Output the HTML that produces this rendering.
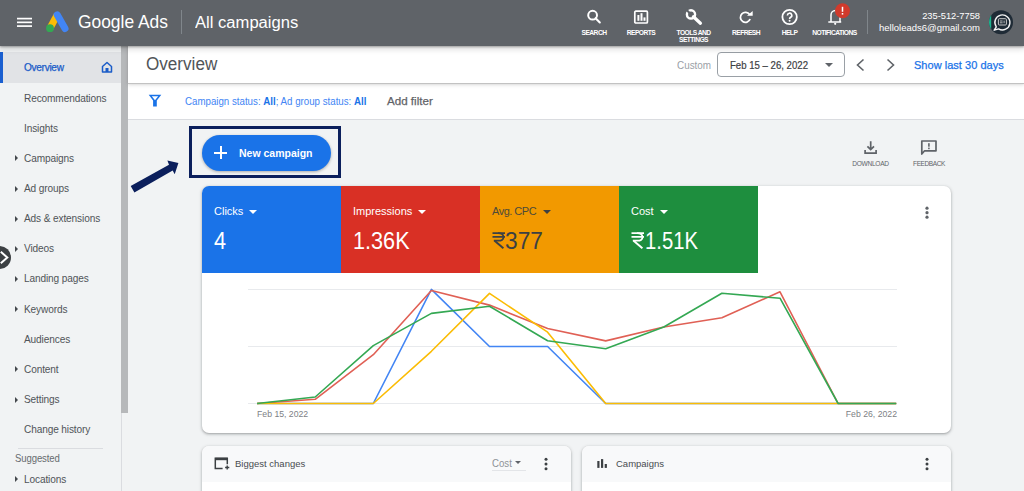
<!DOCTYPE html>
<html><head><meta charset="utf-8">
<style>
*{box-sizing:border-box;margin:0;padding:0}
html,body{width:1024px;height:491px;overflow:hidden;background:#f1f3f4;font-family:"Liberation Sans",sans-serif;}
.a{position:absolute;white-space:nowrap}
#top{position:absolute;left:0;top:0;width:1024px;height:46px;background:#5f6368;z-index:5;box-shadow:0 1px 2px rgba(0,0,0,.3),0 2px 6px 1px rgba(0,0,0,.15)}
#side{position:absolute;left:0;top:46px;width:121px;height:445px;background:#f1f3f4}
#sbar{position:absolute;left:121px;top:46px;width:7px;height:445px;background:#f1f3f4;border-left:1px solid #dadce0}
#sthumb{position:absolute;left:121px;top:46px;width:7px;height:367px;background:#b6b8ba}
.si{position:absolute;left:24px;font-size:10.1px;color:#505458;letter-spacing:-0.12px;line-height:12px;margin-top:1.4px}
.tri{position:absolute;left:15px;width:0;height:0;border-top:3px solid transparent;border-bottom:3px solid transparent;border-left:3.8px solid #44484c;margin-top:-0.1px}
#hdr{position:absolute;left:128px;top:46px;width:896px;height:38px;background:#fff;border-bottom:1px solid #c2c2c2;box-shadow:0 1px 4px rgba(0,0,0,.13),0 0 2px rgba(0,0,0,.08)}
#flt{position:absolute;left:128px;top:83px;width:896px;height:37px;background:#fff;border-bottom:1px solid #dadce0}
.card{position:absolute;background:#fff;border-radius:7px;box-shadow:0 1px 2px rgba(60,64,67,.3),0 1px 3px 1px rgba(60,64,67,.15)}
.tile{position:absolute;top:0;width:139px;height:87px}
.tl{position:absolute;left:12px;top:19px;font-size:11px;line-height:12px}
.tv{position:absolute;left:12px;top:42px;font-size:23.3px;line-height:26px;transform:scaleX(0.93);transform-origin:0 0}
.dd{display:inline-block;width:0;height:0;border-left:4px solid transparent;border-right:4px solid transparent;border-top:4px solid currentColor;margin-left:6px;vertical-align:2px;position:relative;top:1.2px}
.ic{position:absolute;font-size:6.7px;font-weight:bold;color:#fff;text-align:center;line-height:7.8px;letter-spacing:-0.55px;top:28.6px !important}
</style></head><body>

<!-- top bar -->
<div id="top">
  <!-- hamburger -->
  <svg class="a" style="left:16px;top:16px" width="18" height="13" viewBox="0 0 18 13"><g stroke="#fff" stroke-width="1.7"><line x1="1" y1="2.6" x2="16" y2="2.6"/><line x1="1" y1="6.35" x2="16" y2="6.35"/><line x1="1" y1="10.1" x2="16" y2="10.1"/></g></svg>
  <!-- logo -->
  <svg class="a" style="left:44px;top:10px" width="26" height="24" viewBox="0 0 26 24">
    <line x1="13.2" y1="4.8" x2="6" y2="18.2" stroke="#fbbc04" stroke-width="7" stroke-linecap="butt"/>
    <line x1="13.2" y1="4.8" x2="21" y2="18.5" stroke="#4285f4" stroke-width="7" stroke-linecap="round"/>
    <circle cx="6" cy="18.2" r="3.9" fill="#34a853"/>
  </svg>
  <div class="a" style="left:78px;top:11px;font-size:18.5px;line-height:22px;color:#fff;transform:scaleX(0.94);transform-origin:0 0">Google Ads</div>
  <div class="a" style="left:181px;top:10px;width:1px;height:24px;background:#80868b"></div>
  <div class="a" style="left:195px;top:11.5px;font-size:17.3px;line-height:21px;color:#fff;transform:scaleX(0.96);transform-origin:0 0">All campaigns</div>

  <!-- right icons -->
  <svg class="a" style="left:586px;top:9px" width="17" height="17" viewBox="0 0 17 17">
    <circle cx="6.6" cy="6.2" r="4.4" fill="none" stroke="#fff" stroke-width="2"/>
    <line x1="9.6" y1="9.2" x2="13.8" y2="13.4" stroke="#fff" stroke-width="2.1" stroke-linecap="round"/>
  </svg>
  <div class="ic" style="left:574px;top:29px;width:40px">SEARCH</div>

  <svg class="a" style="left:633px;top:10px" width="16" height="15" viewBox="0 0 16 15">
    <rect x="1.8" y="1.2" width="12.6" height="11.8" rx="1" fill="none" stroke="#fff" stroke-width="1.7"/>
    <rect x="4.4" y="5" width="2" height="5.8" fill="#fff"/>
    <rect x="7.5" y="3.2" width="2" height="7.6" fill="#fff"/>
    <rect x="10.5" y="7.4" width="2" height="3.4" fill="#fff"/>
  </svg>
  <div class="ic" style="left:621px;top:29px;width:40px">REPORTS</div>

  <svg class="a" style="left:680px;top:4px" width="30" height="24" viewBox="680 4 30 24">
    <line x1="693.4" y1="16.8" x2="700.4" y2="23.2" stroke="#fff" stroke-width="3.3" stroke-linecap="round"/>
    <circle cx="691" cy="14.4" r="4.1" fill="none" stroke="#fff" stroke-width="2.4"/>
    <line x1="686.2" y1="9.6" x2="690.8" y2="14.2" stroke="#5f6368" stroke-width="2.1" stroke-linecap="round"/>
  </svg>
  <div class="ic" style="left:673px;top:29px;width:41px">TOOLS AND<br>SETTINGS</div>

  <svg class="a" style="left:738px;top:9px" width="17" height="16" viewBox="0 0 17 16">
    <path d="M11.6 5.6 A5 5 0 1 0 12.1 10" fill="none" stroke="#fff" stroke-width="1.8"/>
    <path d="M9 6.7 L14.7 6.7 L14.7 1.9 Z" fill="#fff"/>
  </svg>
  <div class="ic" style="left:726px;top:29px;width:40px">REFRESH</div>

  <svg class="a" style="left:780px;top:8px" width="19" height="19" viewBox="0 0 19 19">
    <circle cx="9.6" cy="9" r="7.2" fill="none" stroke="#fff" stroke-width="1.8"/>
    <path d="M7.4 7.4 A2.2 2.2 0 1 1 10.6 9.3 C9.8 9.8 9.6 10.2 9.6 11" fill="none" stroke="#fff" stroke-width="1.6"/>
    <circle cx="9.6" cy="12.8" r="0.95" fill="#fff"/>
  </svg>
  <div class="ic" style="left:769px;top:29px;width:41px">HELP</div>

  <svg class="a" style="left:826px;top:2px" width="26" height="24" viewBox="0 0 26 24">
    <path d="M2.3 20 L15.2 20 M5 19.5 L5 13 A4.5 4.5 0 0 1 14 13 L14 19.5" fill="none" stroke="#fff" stroke-width="1.5"/>
    <circle cx="9.2" cy="21.8" r="1.1" fill="#fff"/>
    <circle cx="16.5" cy="8.8" r="7.5" fill="#d13a2c"/>
    <rect x="15.75" y="4.8" width="1.5" height="5" fill="#fff"/>
    <rect x="15.75" y="11" width="1.5" height="1.6" fill="#fff"/>
  </svg>
  <div class="ic" style="left:809px;top:29px;width:51px">NOTIFICATIONS</div>

  <div class="a" style="left:867px;top:10px;width:1px;height:24px;background:#80868b"></div>
  <div class="a" style="left:870px;top:9.6px;width:110px;text-align:right;font-size:9.9px;line-height:12px;color:#fff;transform:scaleX(0.94);transform-origin:100% 0">235-512-7758</div>
  <div class="a" style="left:870px;top:22px;width:110px;text-align:right;font-size:9.5px;line-height:12px;color:#fff">helloleads6@gmail.com</div>
  <svg class="a" style="left:988px;top:9px" width="26" height="26" viewBox="988 9 26 26">
    <clipPath id="av"><circle cx="1001" cy="22.3" r="12"/></clipPath>
    <circle cx="1001" cy="22.3" r="12" fill="#1f2b36"/>
    <rect x="988" y="9" width="3.2" height="26" fill="#1db28e" clip-path="url(#av)"/>
    <path d="M996.3 26.8 A7.5 7.5 0 1 1 998.6 28.9 L994.2 30.2 Z" fill="#1f2b36" stroke="#f4f4f4" stroke-width="1.4" stroke-linejoin="round"/>
    <rect x="998.4" y="18.7" width="8" height="6.3" rx="1" fill="none" stroke="#c8c8c8" stroke-width="1"/>
    <path d="M999.9 21 H1002.6 M999.9 22.8 H1002.6 M1004.1 20.6 V23.2" stroke="#c8c8c8" stroke-width="0.9"/>
  </svg>
</div>

<!-- sidebar -->
<div id="side"></div>
<div class="a" style="left:0;top:52px;width:121px;height:31px;background:#e1e3e6"></div>
<div class="a" style="left:0;top:52px;width:3px;height:31px;background:#1a5fd0"></div>
<div class="si" style="top:61px;color:#1a5cc8;-webkit-text-stroke:0.25px #1a5cc8;letter-spacing:-0.3px">Overview</div>
<svg class="a" style="left:101.4px;top:61.3px" width="12" height="12" viewBox="0 0 12 12">
  <path d="M1.5 11 L1.5 5.5 L6 1.5 L10.5 5.5 L10.5 11 Z" fill="none" stroke="#1a5cc8" stroke-width="1.5" stroke-linejoin="round"/>
  <rect x="4.5" y="7" width="3" height="4" fill="#1a5cc8"/>
</svg>
<div class="si" style="top:91.15px">Recommendations</div>
<div class="si" style="top:121.30px">Insights</div>
<div class="tri" style="top:155.45px"></div><div class="si" style="top:151.45px">Campaigns</div>
<div class="tri" style="top:185.60px"></div><div class="si" style="top:181.60px">Ad groups</div>
<div class="tri" style="top:215.75px"></div><div class="si" style="top:211.75px">Ads &amp; extensions</div>
<div class="tri" style="top:245.90px"></div><div class="si" style="top:241.90px">Videos</div>
<div class="tri" style="top:276.05px"></div><div class="si" style="top:272.05px">Landing pages</div>
<div class="tri" style="top:306.20px"></div><div class="si" style="top:302.20px">Keywords</div>
<div class="si" style="top:332.35px">Audiences</div>
<div class="tri" style="top:366.50px"></div><div class="si" style="top:362.50px">Content</div>
<div class="tri" style="top:396.65px"></div><div class="si" style="top:392.65px">Settings</div>
<div class="si" style="top:422.80px">Change history</div>
<div class="a" style="left:18px;top:448px;width:85px;height:1px;background:#dadce0"></div>
<div class="si" style="top:451.3px;left:15px;font-size:10.4px;color:#676b6f;transform:scaleX(0.92);transform-origin:0 0">Suggested</div>
<div class="tri" style="top:476.5px"></div><div class="si" style="top:472.3px">Locations</div>
<div id="sbar"></div>
<div id="sthumb"></div>
<!-- collapse circle -->
<svg class="a" style="left:0;top:244px" width="14" height="27" viewBox="0 244 14 27"><circle cx="-0.5" cy="257.5" r="11.5" fill="#3c4043"/><path d="M0.8 251.8 L7.3 257.5 L0.8 263.2" fill="none" stroke="#fff" stroke-width="2"/></svg>

<!-- main header -->
<div id="flt"></div>
<div id="hdr"></div>
<div class="a" style="left:146px;top:54px;font-size:18px;line-height:21px;color:#505458;transform:scaleX(0.95);transform-origin:0 0">Overview</div>
<div class="a" style="left:677px;top:59.1px;font-size:10.8px;line-height:13px;color:#9aa0a6;transform:scaleX(0.915);transform-origin:0 0">Custom</div>
<div class="a" style="left:717px;top:52px;width:128px;height:25px;border:1px solid #9aa0a6;border-radius:4px;background:#fff"></div>
<div class="a" style="left:730px;top:59.2px;font-size:10.5px;line-height:13px;color:#3c4043;-webkit-text-stroke:0.2px #3c4043;transform:scaleX(0.915);transform-origin:0 0">Feb 15 – 26, 2022</div>
<div class="a" style="left:825px;top:63px;width:0;height:0;border-left:4px solid transparent;border-right:4px solid transparent;border-top:4px solid #5f6368"></div>
<svg class="a" style="left:855px;top:58px" width="10" height="14" viewBox="0 0 10 14"><path d="M8.5 1.5 L2.5 7 L8.5 12.5" fill="none" stroke="#5f6368" stroke-width="1.6"/></svg>
<svg class="a" style="left:886px;top:58px" width="10" height="14" viewBox="0 0 10 14"><path d="M1.5 1.5 L7.5 7 L1.5 12.5" fill="none" stroke="#5f6368" stroke-width="1.6"/></svg>
<div class="a" style="left:914px;top:58.5px;font-size:11px;line-height:13px;color:#1a73e8;-webkit-text-stroke:0.25px #1a73e8;letter-spacing:0.03px">Show last 30 days</div>

<!-- filter bar -->
<svg class="a" style="left:144px;top:90px" width="22" height="20" viewBox="144 90 22 20">
  <path fill-rule="evenodd" fill="#1a73e8" d="M148.7 94.7 L161.3 94.7 L156.8 100.6 L156.8 106.6 L153.1 106.6 L153.1 100.6 Z M151.8 96.3 L158.2 96.3 L155 100.3 Z"/>
</svg>
<div class="a" style="left:185px;top:94.5px;font-size:10.5px;line-height:13px;color:#4285f4;transform:scaleX(0.925);transform-origin:0 0">Campaign status: <b style="color:#1a73e8">All</b>; Ad group status: <b style="color:#1a73e8">All</b></div>
<div class="a" style="left:387px;top:94px;font-size:11.6px;line-height:13px;color:#5f6368;-webkit-text-stroke:0.25px #5f6368">Add filter</div>

<!-- new campaign -->
<div class="a" style="left:189px;top:126px;width:152px;height:52px;border:3px solid #0b1f5c"></div>
<div class="a" style="left:202px;top:135px;width:129px;height:36px;border-radius:18px;background:#1a73e8;box-shadow:0 1px 3px rgba(0,0,0,.3)"></div>
<div class="a" style="left:214px;top:152px;width:13px;height:2px;background:#fff"></div>
<div class="a" style="left:219.5px;top:146px;width:2px;height:13px;background:#fff"></div>
<div class="a" style="left:239px;top:147px;font-size:10.5px;line-height:13px;font-weight:bold;color:#fff">New campaign</div>
<svg class="a" style="left:125px;top:155px" width="60" height="40" viewBox="125 155 60 40">
  <path d="M130.7 186 L134.4 192.5 L172.7 170.5 L174.7 174.2 L178.4 163.1 L167.4 160.5 L169 164.8 Z" fill="#0b1f5c"/>
</svg>

<!-- download / feedback -->
<svg class="a" style="left:862px;top:139px" width="18" height="17" viewBox="0 0 18 17">
  <path d="M8.7 2.2 L8.7 10.6 M5.4 7.3 L8.7 10.6 L12 7.3" fill="none" stroke="#5f6368" stroke-width="1.7"/>
  <path d="M3.1 11 L3.1 14.2 L14.1 14.2 L14.1 11" fill="none" stroke="#5f6368" stroke-width="1.7"/>
</svg>
<div class="a" style="left:850px;top:159.5px;width:41px;text-align:center;font-size:6.6px;line-height:8px;letter-spacing:-0.3px;color:#5f6368">DOWNLOAD</div>
<svg class="a" style="left:919px;top:138px" width="20" height="19" viewBox="0 0 20 19">
  <path d="M2.8 16 L2.8 3 L17 3 L17 12.8 L5.6 12.8 Z" fill="none" stroke="#5f6368" stroke-width="1.7" stroke-linejoin="round"/>
  <rect x="9.1" y="5.2" width="1.6" height="3.5" fill="#5f6368"/>
  <rect x="9.1" y="9.6" width="1.6" height="1.6" fill="#5f6368"/>
</svg>
<div class="a" style="left:908px;top:159.5px;width:42px;text-align:center;font-size:6.5px;line-height:8px;letter-spacing:-0.4px;color:#5f6368">FEEDBACK</div>

<!-- chart card -->
<div class="card" style="left:202px;top:186px;width:749px;height:247px;overflow:hidden">
  <div class="tile" style="left:0;background:#1a73e8;color:#fff"><div class="tl">Clicks<span class="dd"></span></div><div class="tv">4</div></div>
  <div class="tile" style="left:139px;background:#d93025;color:#fff"><div class="tl">Impressions<span class="dd"></span></div><div class="tv">1.36K</div></div>
  <div class="tile" style="left:278px;background:#f29900;color:#3c4043"><div class="tl" style="letter-spacing:-0.5px;color:#4d4a3a">Avg. CPC<span class="dd" style="margin-left:6.5px;color:#3c4043"></span></div><svg class="a" style="left:12px;top:46px" width="14" height="18" viewBox="0 0 14 18"><g fill="none" stroke="#3c4043" stroke-width="1.75"><path d="M0.5 1 H13"/><path d="M0.5 4.9 H13"/><path d="M6 1 C10.1 1 11.5 3 11.5 4.9 C11.5 7.3 9.6 8.7 6.2 8.7 H1.8"/><path d="M2.6 8.8 L11.4 16.3" stroke-width="1.95"/></g></svg><div class="tv" style="left:25.3px;transform:scaleX(0.975)">377</div></div>
  <div class="tile" style="left:417px;background:#1e8e3e;color:#fff"><div class="tl">Cost<span class="dd"></span></div><svg class="a" style="left:12px;top:46px" width="14" height="18" viewBox="0 0 14 18"><g fill="none" stroke="#fff" stroke-width="1.75"><path d="M0.5 1 H13"/><path d="M0.5 4.9 H13"/><path d="M6 1 C10.1 1 11.5 3 11.5 4.9 C11.5 7.3 9.6 8.7 6.2 8.7 H1.8"/><path d="M2.6 8.8 L11.4 16.3" stroke-width="1.95"/></g></svg><div class="tv" style="left:26px;transform:scaleX(0.87)">1.51K</div></div>
  <svg class="a" style="left:720.8px;top:20.3px" width="8" height="15" viewBox="0 0 8 15">
    <circle cx="4" cy="2.2" r="1.6" fill="#5f6368"/><circle cx="4" cy="6.7" r="1.6" fill="#5f6368"/><circle cx="4" cy="11.2" r="1.6" fill="#5f6368"/>
  </svg>
</div>

<!-- chart svg (page coords) -->
<svg class="a" style="left:0;top:0" width="1024" height="491" viewBox="0 0 1024 491">
  <g stroke="#e8eaed" stroke-width="1">
    <line x1="248" y1="289.5" x2="897" y2="289.5"/>
    <line x1="248" y1="346.5" x2="897" y2="346.5"/>
    <line x1="248" y1="403.5" x2="897" y2="403.5"/>
  </g>
  <g fill="none" stroke-width="1.6" stroke-linejoin="round">
    <polyline stroke="#4285f4" points="257.1,403.5 315.2,403.5 373.3,403.5 431.4,289.4 489.5,346.5 547.6,346.5 605.7,403.5 663.8,403.5 721.9,403.5 780.0,403.5 838.1,403.5 896.2,403.5"/>
    <polyline stroke="#e06055" points="257.1,403.5 315.2,399.3 373.3,354.7 431.4,290.5 489.5,305.1 547.6,328.5 605.7,340.9 663.8,327 721.9,317.8 780.0,291.8 838.1,403.5 896.2,403.5"/>
    <polyline stroke="#fbbc04" points="257.1,403.5 315.2,403.5 373.3,403.5 431.4,351.3 489.5,293.4 547.6,332.2 605.7,403.5 663.8,403.5 721.9,403.5 780.0,403.5 838.1,403.5 896.2,403.5"/>
    <polyline stroke="#34a853" points="257.1,403.5 315.2,397 373.3,345.6 431.4,313.4 489.5,306.2 547.6,340.8 605.7,348.7 663.8,327 721.9,293.3 780.0,298.2 838.1,403.5 896.2,403.5"/>
  </g>
  <text x="257" y="417" font-family="Liberation Sans" font-size="8.7" fill="#7d8185">Feb 15, 2022</text>
  <text x="897" y="417" font-family="Liberation Sans" font-size="8.7" fill="#7d8185" text-anchor="end">Feb 26, 2022</text>
</svg>

<!-- bottom cards -->
<div class="card" style="left:202px;top:446px;width:369px;height:60px;background:#fff;overflow:hidden">
  <div class="a" style="left:0;top:0;width:369px;height:36px;background:#f8f9fa"></div>
  <svg class="a" style="left:12px;top:11px" width="17" height="14" viewBox="0 0 17 14">
    <path d="M8.6 11.4 L1.3 11.4 L1.3 1.3 L13.3 1.3 L13.3 7.2" fill="none" stroke="#3c4043" stroke-width="1.5"/>
    <rect x="1.3" y="0.8" width="12" height="2.4" fill="#3c4043"/>
    <path d="M13.2 8.4 L13.2 12.6 M11.1 10.5 L15.3 10.5" stroke="#3c4043" stroke-width="1.4"/>
  </svg>
  <div class="a" style="left:33px;top:11.5px;font-size:9.5px;line-height:12px;color:#484c50">Biggest changes</div>
  <div class="a" style="left:289.5px;top:10.5px;font-size:10.4px;line-height:13px;color:#8f9397;transform:scaleX(0.93);transform-origin:0 0">Cost</div>
  <div class="a" style="left:313px;top:14.6px;width:0;height:0;border-left:3.4px solid transparent;border-right:3.4px solid transparent;border-top:3.6px solid #5f6368"></div>
  <div class="a" style="left:289.5px;top:24px;width:34px;height:1px;background:#e3e5e8"></div>
  <svg class="a" style="left:340.2px;top:10.6px" width="8" height="15" viewBox="0 0 8 15">
    <circle cx="4" cy="2.3" r="1.5" fill="#3c4043"/><circle cx="4" cy="7" r="1.5" fill="#3c4043"/><circle cx="4" cy="11.7" r="1.5" fill="#3c4043"/>
  </svg>
</div>
<div class="card" style="left:582px;top:446px;width:369px;height:60px;background:#fff;overflow:hidden">
  <div class="a" style="left:0;top:0;width:369px;height:36px;background:#f8f9fa"></div>
  <svg class="a" style="left:0;top:0" width="30" height="30" viewBox="0 0 30 30">
    <rect x="15.3" y="15" width="2.2" height="6.9" fill="#3c4043"/><rect x="19" y="13.1" width="2.2" height="8.8" fill="#3c4043"/><rect x="22.7" y="18" width="2.2" height="3.9" fill="#3c4043"/>
  </svg>
  <div class="a" style="left:34px;top:11.5px;font-size:9.5px;line-height:12px;color:#484c50">Campaigns</div>
  <svg class="a" style="left:341px;top:10.6px" width="8" height="15" viewBox="0 0 8 15">
    <circle cx="4" cy="2.3" r="1.5" fill="#3c4043"/><circle cx="4" cy="7" r="1.5" fill="#3c4043"/><circle cx="4" cy="11.7" r="1.5" fill="#3c4043"/>
  </svg>
</div>

</body></html>
